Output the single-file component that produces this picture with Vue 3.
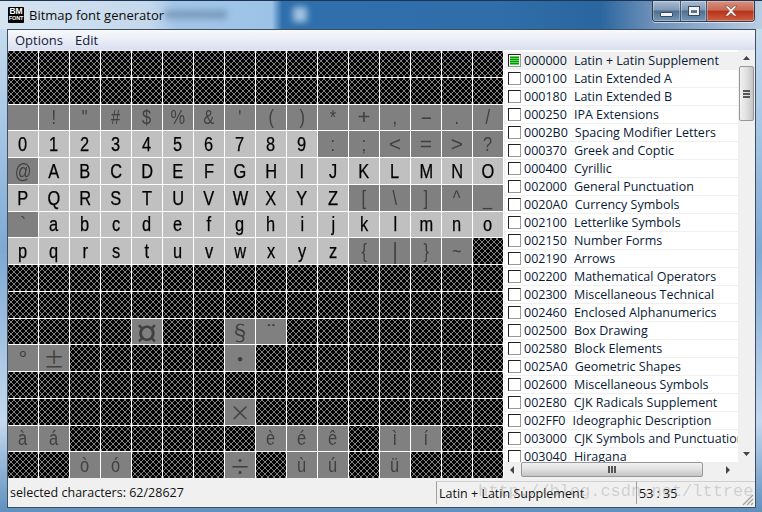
<script setup>
const selected = new Set();
for (let c = 48; c <= 57; c++) selected.add(c);
for (let c = 65; c <= 90; c++) selected.add(c);
for (let c = 97; c <= 122; c++) selected.add(c);
const extra = [0xa4, 0xa7, 0xa8, 0xb0, 0xb1, 0xb7, 0xd7, 0xe0, 0xe1, 0xe8, 0xe9, 0xea, 0xec, 0xed, 0xf2, 0xf3, 0xf7, 0xf9, 0xfa, 0xfc];
// These come out full width in the reference's Chinese font, so they keep a CJK family.
const wide = '¤§¨°±·×÷';
const stretch = { '¤': [1.7, 1.7], '-': [1.9, 1], '+': [1.1, 1], '=': [1.05, 1], '<': [1.05, 1], '>': [1.05, 1], '|': [1, 1.2] };
const cells = [];
for (let c = 0; c < 256; c++) {
  let kind = 'hatch';
  if (selected.has(c)) kind = 'sel';
  else if ((c >= 32 && c < 127) || extra.includes(c)) kind = 'dis';
  const ch = kind === 'hatch' ? '' : String.fromCharCode(c);
  const s = stretch[ch];
  cells.push({ c, kind, ch, wide: ch !== '' && wide.includes(ch), style: s ? { transform: `scale(${s[0]}, ${s[1]})` } : null });
}
const blocks = [
  ['000000', 'Latin + Latin Supplement'], ['000100', 'Latin Extended A'], ['000180', 'Latin Extended B'],
  ['000250', 'IPA Extensions'], ['0002B0', 'Spacing Modifier Letters'], ['000370', 'Greek and Coptic'],
  ['000400', 'Cyrillic'], ['002000', 'General Punctuation'], ['0020A0', 'Currency Symbols'],
  ['002100', 'Letterlike Symbols'], ['002150', 'Number Forms'], ['002190', 'Arrows'],
  ['002200', 'Mathematical Operators'], ['002300', 'Miscellaneous Technical'], ['002460', 'Enclosed Alphanumerics'],
  ['002500', 'Box Drawing'], ['002580', 'Block Elements'], ['0025A0', 'Geometric Shapes'],
  ['002600', 'Miscellaneous Symbols'], ['002E80', 'CJK Radicals Supplement'], ['002FF0', 'Ideographic Description'],
  ['003000', 'CJK Symbols and Punctuation'], ['003040', 'Hiragana'],
];
</script>

<template>
  <div class="window">
    <header class="titlebar">
      <div class="appicon"><span class="bm">BM</span><span class="font">FONT</span></div>
      <span class="title">Bitmap font generator</span>
      <div class="blurred"></div>
      <div class="caption">
        <button class="cap min"><i></i></button>
        <button class="cap max"><i></i></button>
        <button class="cap close">
          <svg width="16" height="12" viewBox="0 0 16 12"><path d="M2 1h3l3 3 3-3h3l-4.500 5 4.500 5h-3l-3-3-3 3h-3l4.500-5z" fill="#f4f4f4" stroke="#7d3a30" stroke-width=".6"/></svg>
        </button>
      </div>
    </header>
    <div class="client">
      <nav class="menu"><span>Options</span><span>Edit</span></nav>
      <main class="main">
        <div class="grid">
          <div v-for="cell in cells" :key="cell.c" class="cell" :class="cell.kind">
            <span :class="{ wide: cell.wide }" :lang="cell.wide ? 'zh-CN' : null" :style="cell.style">{{ cell.ch }}</span>
          </div>
        </div>
        <section class="side">
          <div class="side-top">
            <ul class="list">
              <li v-for="(b, i) in blocks" :key="b[0]" class="row" :class="{ first: i === 0 }">
                <span class="check" :class="{ part: i === 0 }"></span>
                <span class="code">{{ b[0] }}</span>
                <span class="name">{{ b[1] }}</span>
              </li>
            </ul>
            <div class="vbar">
              <svg class="arrow" width="17" height="16" viewBox="0 0 17 16"><path d="M5 10l3.500-4 3.500 4z" fill="#444"/></svg>
              <div class="vthumb"><i></i><i></i><i></i></div>
              <div class="spacer"></div>
              <svg class="arrow" width="17" height="16" viewBox="0 0 17 16"><path d="M5 6l3.500 4 3.500-4z" fill="#444"/></svg>
            </div>
          </div>
          <div class="hbar">
            <svg width="16" height="16" viewBox="0 0 16 16"><path d="M9 4l-4 4 4 4z" fill="#444"/></svg>
            <div class="hthumb"><i></i><i></i><i></i></div>
            <svg class="harrow-r" width="16" height="16" viewBox="0 0 16 16"><path d="M6 4l4 4-4 4z" fill="#444"/></svg>
            <div class="corner"></div>
          </div>
        </section>
      </main>
      <footer class="status">
        <div class="field f1">selected characters: 62/28627</div>
        <div class="field f2">Latin + Latin Supplement</div>
        <div class="field f3">53 : 35</div>
        <span class="watermark">http://blog.csdn.net/lttree</span>
        <svg class="grip" width="14" height="14" viewBox="0 0 14 14"><path d="M13 3L3 13M13 7L7 13M13 11L11 13" stroke="#a0a0a0" stroke-width="1.200"/></svg>
      </footer>
    </div>
  </div>
</template>

<style>
html, body { margin: 0; padding: 0; overflow: hidden; }
</style>

<style scoped>
.window {
  width: 762px;
  height: 512px;
  box-sizing: border-box;
  padding: 0 6px 4px 7px;
  display: flex;
  flex-direction: column;
  font-family: "Open Sans", "Noto Sans", sans-serif;
  font-size: 12.5px;
  color: #111;
  border-top: 1px solid #1d3550;
  background: linear-gradient(180deg, #cfe1f0 0, #a9c8e6 120px, #7fa9d3 250px, #c5d9ee 420px, #5f8fbe 512px);
}
.titlebar {
  height: 28px;
  display: flex;
  align-items: center;
  position: relative;
  margin: 0 -6px 0 -7px;
  padding-left: 8px;
  background: linear-gradient(90deg, #d6e4f1 0, #c4d8ec 150px, #a3c6e8 175px, #9cc3e7 272px, #2f6fac 282px, #2f6ea9 500px, #2a669f 600px, #6b8fb8 650px, #9db7d4 720px, #b9cde2 762px);
}
.appicon {
  width: 16px;
  height: 16px;
  background: #000;
  color: #fff;
  display: flex;
  flex-direction: column;
  align-items: center;
  border-radius: 1px;
  font-family: "Liberation Sans", sans-serif;
  font-weight: 700;
  line-height: 1;
  overflow: hidden;
}
.bm { font-size: 8.500px; height: 9px; letter-spacing: -.2px; }
.font { font-size: 5.500px; height: 6px; letter-spacing: -.1px; }
.title { margin-left: 5px; font-size: 13px; color: #0a0a0a; margin-top: -1px; }
.blurred {
  position: absolute;
  left: 165px;
  top: 9px;
  width: 62px;
  height: 9px;
  background: #6f8fae;
  filter: blur(3px);
  opacity: .75;
}
.blurred::after {
  content: "";
  position: absolute;
  left: 128px;
  top: -3px;
  width: 14px;
  height: 15px;
  background: #c9dff3;
}
.caption {
  margin-left: auto;
  align-self: flex-start;
  margin-right: 7px;
  display: flex;
  height: 20px;
  border: 1px solid #2c3e50;
  border-top: none;
  border-radius: 0 0 4px 4px;
  box-shadow: 0 1px 0 rgba(255,255,255,.6);
  overflow: hidden;
}
.cap {
  padding: 0;
  border: none;
  border-right: 1px solid #46586c;
  display: flex;
  align-items: center;
  justify-content: center;
  background: linear-gradient(180deg, #a9bdd4 0, #7f98b5 45%, #4f6f91 50%, #7595b6 100%);
  box-shadow: inset 0 0 0 1px rgba(255,255,255,.3);
}
.min { width: 28px; }
.min i { width: 11px; height: 3px; margin-top: 6px; background: #f4f4f4; border: 1px solid #3a4a5c; border-radius: 1px; }
.max { width: 26px; }
.max i { width: 6px; height: 3px; border: 2px solid #f0f0f0; border-top-width: 3px; outline: 1px solid #3a4a5c; box-sizing: content-box; }
.close { width: 47px; border-right: none; background: linear-gradient(180deg, #d9907e 0, #c66a55 45%, #b8321c 52%, #cf5f40 100%); }
.client {
  flex: 1;
  display: flex;
  flex-direction: column;
  min-height: 0;
  border: 1px solid #3d4f63;
  background: #f0f0f0;
}
.menu {
  height: 20px;
  display: flex;
  align-items: center;
  gap: 12px;
  padding-left: 7px;
  font-size: 13px;
  background: linear-gradient(180deg, #f8f9fc 0, #eef0f8 40%, #d8dff0 100%);
  color: #14203a;
}
.menu span { padding: 0 0 1px; }
.main {
  height: 428px;
  display: flex;
  background: #f0f0f0;
}
.grid {
  width: 496px;
  height: 427px;
  margin-top: 1px;
  display: grid;
  grid-template-columns: repeat(16, 30px);
  grid-template-rows: repeat(16, 1fr);
  gap: 1px;
  background: #fff;
}
.cell {
  display: flex;
  align-items: center;
  justify-content: center;
  font-family: "Liberation Sans", sans-serif;
  font-size: 20px;
  line-height: 1;
}
.cell span { display: inline-block; transform: scaleX(.82); }
.cell span.wide {
  font-family: "Noto Sans CJK SC", "Noto Sans", sans-serif;
  font-size: 21px;
  transform: none;
}
.sel { background: #c0c0c0; color: #000; -webkit-text-stroke: .25px currentColor; }
.dis { background: #808080; color: #404040; }
.hatch {
  background-color: #000;
  background-image:
    repeating-linear-gradient(45deg, #808080 0, #808080 .9px, transparent .9px, transparent 4.243px),
    repeating-linear-gradient(-45deg, #808080 0, #808080 .9px, transparent .9px, transparent 4.243px);
}
.side {
  width: 250px;
  margin-left: 1px;
  display: flex;
  flex-direction: column;
  background: #fff;
}
.side-top {
  height: 412px;
  display: flex;
  overflow: hidden;
}
.list {
  list-style: none;
  margin: 2px 0 0;
  padding: 0;
  width: 233px;
  overflow: hidden;
}
.row {
  height: 18px;
  box-sizing: border-box;
  display: flex;
  align-items: center;
  border-bottom: 1px solid #f0f0f0;
  padding-left: 3px;
  white-space: nowrap;
  font-size: 12.5px;
  color: #0a1a36;
}
.first { background: #f0f0f0; }
.check {
  width: 13px;
  height: 13px;
  box-sizing: border-box;
  flex: none;
  background: #fff;
  border: 1px solid;
  border-color: #222 #999 #999 #222;
  margin-right: 3px;
}
.part {
  background: repeating-linear-gradient(180deg, #009a00 0, #009a00 1px, #62d262 1px, #62d262 2px);
  box-shadow: inset 0 0 0 1px #fff;
}
.name { margin-left: 7px; }
.vbar {
  width: 17px;
  display: flex;
  flex-direction: column;
  background: #f0f0f0;
}
.arrow { flex: none; }
.vthumb {
  height: 55px;
  width: 15px;
  margin-left: 1px;
  box-sizing: border-box;
  border: 1px solid #979797;
  border-radius: 2px;
  background: linear-gradient(90deg, #f1f1f1, #e0e0e0 50%, #c4c4c4);
  display: flex;
  flex-direction: column;
  justify-content: center;
  align-items: center;
  gap: 1px;
}
.vthumb i { width: 7px; height: 2px; background: #555; }
.spacer { flex: 1; }
.hbar {
  height: 16px;
  display: flex;
  background: #f0f0f0;
}
.hbar svg { flex: none; }
.hthumb {
  width: 182px;
  height: 15px;
  box-sizing: border-box;
  border: 1px solid #979797;
  border-radius: 2px;
  background: linear-gradient(180deg, #f1f1f1, #e0e0e0 50%, #c4c4c4);
  display: flex;
  justify-content: center;
  align-items: center;
  gap: 1px;
}
.hthumb i { width: 2px; height: 7px; background: #555; }
.harrow-r { margin-left: 17px; }
.corner { flex: 1; background: #f0f0f0; }
.status {
  height: 29px;
  position: relative;
  display: flex;
  align-items: center;
  background: #f0f0f0;
}
.field { height: 23px; line-height: 23px; box-sizing: border-box; }
.f1 { width: 428px; padding-left: 2px; }
.f2 { width: 200px; padding-left: 2px; border-left: 1px solid #a0a0a0; border-top: 1px solid #d0d0d0; }
.f3 { flex: 1; padding-left: 2px; border-left: 1px solid #a0a0a0; border-top: 1px solid #d0d0d0; }
.watermark {
  position: absolute;
  left: 470px;
  top: 4px;
  font-family: "Liberation Mono", monospace;
  font-size: 17px;
  line-height: 20px;
  color: rgba(120, 120, 120, .28);
  white-space: nowrap;
}
.grip { position: absolute; right: 1px; bottom: 1px; }
</style>
